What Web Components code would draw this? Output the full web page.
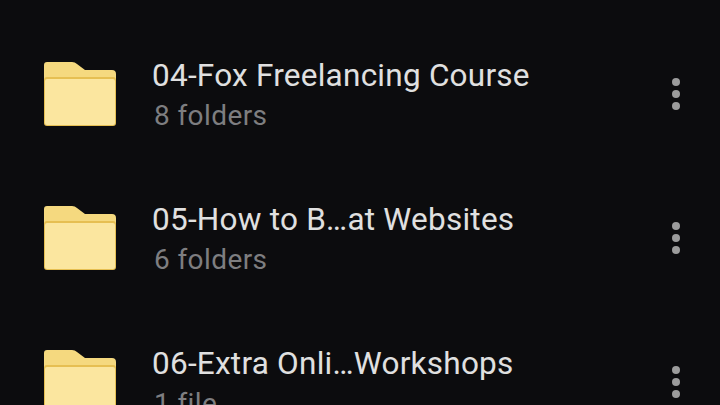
<!DOCTYPE html>
<html>
<head>
<meta charset="utf-8">
<style>
  html, body { margin: 0; height: 405px; overflow: hidden; background: #0c0c0e; }
  body { font-family: Roboto, "Noto Sans", sans-serif; }
</style>
</head>
<body>
<folder-list>
  <folder-row title="04-Fox Freelancing Course" info="8 folders"></folder-row>
  <folder-row title="05-How to B…at Websites" info="6 folders"></folder-row>
  <folder-row title="06-Extra Onli…Workshops" info="1 file"></folder-row>
</folder-list>
<script>
'use strict';

class folderList extends HTMLElement {
    constructor() {
        super();
        this.attachShadow({ mode: "open" });
        this.shadowRoot.innerHTML = `
        <style>
        :host {
            display: flex;
            flex-direction: column;
            height: 405px;
            padding-top: 22px;
            box-sizing: border-box;
            overflow: hidden;
        }
        </style>
        <slot></slot>
      `;
    }
}

class folderIcon extends HTMLElement {
    constructor() {
        super();
        this.attachShadow({ mode: "open" });
        this.shadowRoot.innerHTML = `
        <style>
        :host { display: block; width: 72px; height: 64px; flex: none; }
        svg { display: block; }
        </style>
        <svg width="72" height="64" viewBox="0 0 72 64">
            <path d="M3 0H28Q31 0 33 2L41 8H68Q72 8 72 12V20H0V3Q0 0 3 0Z" fill="#f5d97f"/>
            <rect x="0" y="15" width="72" height="49" rx="3" fill="#e6bf52"/>
            <rect x="1" y="17" width="70" height="46" rx="2" fill="#fbe69f"/>
        </svg>
      `;
    }
}

class folderRow extends HTMLElement {
    constructor() {
        super();
        this.attachShadow({ mode: "open" });
    }

    getStyles() {
        return `
        <style>
        :host {
            display: flex;
            align-items: center;
            height: 144px;
            flex: none;
            padding: 0 40px 0 44px;
        }
        .text {
            flex: 1;
            margin-left: 36px;
            padding-top: 2px;
            display: flex;
            flex-direction: column;
            gap: 5px;
        }
        .title {
            font-size: 31.5px;
            line-height: 35px;
            letter-spacing: 0.24px;
            color: #e0e0e0;
        }
        .info {
            font-size: 28px;
            line-height: 35px;
            letter-spacing: 0.4px;
            color: #7e7e80;
            margin-left: 2px;
        }
        .more {
            display: flex;
            flex-direction: column;
            gap: 4px;
            width: 8px;
        }
        .more i {
            display: block;
            width: 8px;
            height: 8px;
            border-radius: 50%;
            background: #9c9c9c;
        }
        </style>
      `;
    }

    connectedCallback() {
        this.shadowRoot.innerHTML = `
        ${this.getStyles()}
        <folder-icon></folder-icon>
        <div class="text">
            <div class="title">${this.getAttribute("title")}</div>
            <div class="info">${this.getAttribute("info")}</div>
        </div>
        <div class="more"><i></i><i></i><i></i></div>
      `;
    }
}

customElements.define("folder-list", folderList);
customElements.define("folder-icon", folderIcon);
customElements.define("folder-row", folderRow);
</script>
</body>
</html>
